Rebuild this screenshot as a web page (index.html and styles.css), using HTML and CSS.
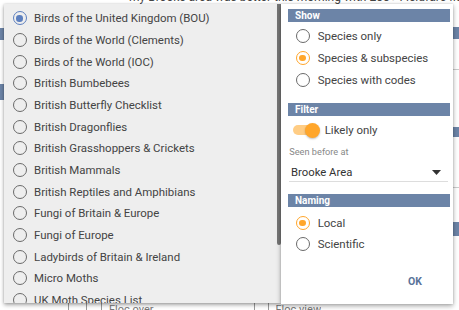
FILE: index.html
```html
<!DOCTYPE html>
<html>
<head>
<meta charset="utf-8">
<link rel="stylesheet" href="styles.css">
</head>
<body>
<div class="bg">
  <div class="bg-text">my Brooke area was better this morning with 200+ Fieldfare flock,</div>
  <div class="bg-cols">
    <div class="bg-left">
      <div class="blk b1"></div>
      <div class="blk b2"></div>
    </div>
    <div class="bg-mid">
      <div class="bg-foot"><span class="ln l1"></span><span class="ln l2"></span><span class="ln l3"></span><span class="foot-t">Floc over</span><span class="ln l4"></span><span class="ln l5"></span><span class="foot-t">Floc view</span></div>
    </div>
    <div class="bg-right">
      <div class="blk r1"></div>
      <div class="hr r2"></div>
      <div class="blk r3"></div>
      <div class="hr r4"></div>
      <div class="blk r5"></div>
    </div>
  </div>
</div>

<div class="menu">
  <div class="thumb"></div>
  <ul class="list">
    <li class="item"><span class="radio blue on"></span>Birds of the United Kingdom (BOU)</li>
    <li class="item"><span class="radio"></span>Birds of the World (Clements)</li>
    <li class="item"><span class="radio"></span>Birds of the World (IOC)</li>
    <li class="item"><span class="radio"></span>British Bumbebees</li>
    <li class="item"><span class="radio"></span>British Butterfly Checklist</li>
    <li class="item"><span class="radio"></span>British Dragonflies</li>
    <li class="item"><span class="radio"></span>British Grasshoppers &amp; Crickets</li>
    <li class="item"><span class="radio"></span>British Mammals</li>
    <li class="item"><span class="radio"></span>British Reptiles and Amphibians</li>
    <li class="item"><span class="radio"></span>Fungi of Britain &amp; Europe</li>
    <li class="item"><span class="radio"></span>Fungi of Europe</li>
    <li class="item"><span class="radio"></span>Ladybirds of Britain &amp; Ireland</li>
    <li class="item"><span class="radio"></span>Micro Moths</li>
    <li class="item"><span class="radio"></span>UK Moth Species List</li>
  </ul>
</div>

<div class="dialog">
  <div class="sec-h">Show</div>
  <div class="group g-show">
    <div class="opt"><span class="radio"></span>Species only</div>
    <div class="opt"><span class="radio orange on"></span>Species &amp; subspecies</div>
    <div class="opt"><span class="radio"></span>Species with codes</div>
  </div>
  <div class="sec-h sec-filter">Filter</div>
  <div class="toggle-row">
    <span class="toggle"><span class="track"></span><span class="knob"></span></span>
    <span>Likely only</span>
  </div>
  <div class="field-label">Seen before at</div>
  <div class="select">
    <span>Brooke Area</span>
    <svg class="caret" width="9" height="5" viewBox="0 0 9 5"><path d="M0 0h9L4.5 5z" fill="#333"/></svg>
  </div>
  <div class="sec-h sec-naming">Naming</div>
  <div class="group g-naming">
    <div class="opt"><span class="radio orange on"></span>Local</div>
    <div class="opt"><span class="radio"></span>Scientific</div>
  </div>
  <div class="actions"><button class="ok">OK</button></div>
</div>
</body>
</html>
```

FILE: styles.css
```css
* { box-sizing: border-box; }
html, body { margin: 0; padding: 0; }
body {
  width: 459px;
  height: 310px;
  overflow: hidden;
  position: relative;
  background: #fff;
  font-family: Roboto, "Liberation Sans", sans-serif;
  color: #444;
}

/* background page */
.bg { width: 459px; height: 310px; display: flex; flex-direction: column; overflow: hidden; }
.bg-text {
  margin-top: -10px;
  padding-left: 129px;
  font-size: 12px;
  line-height: 15px;
  color: #444;
  white-space: nowrap;
}
.bg-cols { flex: 1; display: flex; }
.bg-left { width: 4px; display: flex; flex-direction: column; }
.bg-mid { flex: 1; display: flex; flex-direction: column; justify-content: flex-end; }
.bg-right { width: 6px; margin-left: auto; display: flex; flex-direction: column; }
.blk { background: #6c84a7; }
.b1 { height: 12px; margin-top: 23px; }
.b2 { height: 16px; margin-top: 44px; }
.r1 { height: 12px; margin-top: 22px; }
.hr { height: 1px; background: #ccc; }
.r2 { margin-top: 30px; }
.r3 { height: 10px; margin-top: 57px; }
.r4 { margin-top: 50px; }
.r5 { height: 14px; margin-top: 34px; }
.bg-foot { height: 7px; display: flex; align-items: flex-start; font-size: 11px; color: #777; }
.ln { width: 1px; height: 7px; background: #999; flex: none; }
.l1 { margin-left: 64px; }
.l2 { margin-left: 17px; }
.l3 { margin-left: 14px; }
.l4 { margin-left: 100px; }
.l5 { margin-left: 13px; }
.foot-t { margin-left: 7px; line-height: 14px; height: 7px; overflow: hidden; white-space: nowrap; flex: none; }

/* radio */
.radio {
  width: 14px;
  height: 14px;
  border: 1.6px solid #6a6a6a;
  border-radius: 50%;
  flex: none;
  display: inline-flex;
  align-items: center;
  justify-content: center;
}
.radio.on::after {
  content: "";
  width: 6.5px;
  height: 6.5px;
  border-radius: 50%;
  background: currentColor;
}
.radio.blue { border-color: #5c7fbf; color: #5c7fbf; }
.radio.orange { border-color: #ffa62b; color: #ffa62b; }

/* dropdown list */
.menu {
  position: absolute;
  left: 4px;
  top: 4px;
  width: 277px;
  height: 299px;
  background: #eeeeee;
  overflow: hidden;
  box-shadow: 0 2px 4px rgba(0,0,0,0.35), 0 0 2px rgba(0,0,0,0.15);
}
.thumb {
  position: absolute;
  right: 0;
  top: 0;
  width: 4px;
  height: 241px;
  background: #767676;
  border-radius: 0 0 2px 2px;
}
.list { list-style: none; margin: 0; padding: 3.5px 0 0 8.5px; }
.item {
  height: 21.67px;
  display: flex;
  align-items: center;
  gap: 7.5px;
  font-size: 11.45px;
  color: #444;
  white-space: nowrap;
}

/* dialog */
.dialog {
  position: absolute;
  left: 281px;
  top: 4px;
  width: 172px;
  height: 300px;
  background: #fff;
  padding: 5px 3px 0 7px;
  box-shadow: 0 2px 5px rgba(0,0,0,0.35), 0 0 2px rgba(0,0,0,0.15);
  display: flex;
  flex-direction: column;
}
.sec-h {
  height: 13px;
  line-height: 13px;
  background: #6c84a7;
  color: #fff;
  font-weight: bold;
  font-size: 10px;
  padding-left: 7px;
  flex: none;
}
.sec-filter { margin-top: 13px; }
.sec-naming { margin-top: 12px; }
.group { padding-top: 3.5px; }
.g-naming { padding-top: 5px; }
.opt {
  height: 21.67px;
  display: flex;
  align-items: center;
  gap: 8px;
  padding-left: 7.7px;
  font-size: 11.45px;
  color: #444;
  white-space: nowrap;
}
.toggle-row {
  margin-top: 3px;
  height: 22px;
  display: flex;
  align-items: center;
  gap: 5px;
  padding-left: 4.7px;
  font-size: 11.45px;
  color: #444;
}
.toggle { position: relative; width: 27px; height: 15px; display: inline-block; }
.track {
  position: absolute;
  left: 0;
  top: 2.5px;
  width: 25px;
  height: 10px;
  border-radius: 5px;
  background: #ffcd85;
}
.knob {
  position: absolute;
  right: 0;
  top: 0;
  width: 15px;
  height: 15px;
  border-radius: 50%;
  background: #ffa62b;
  box-shadow: 0 1px 2px rgba(0,0,0,0.25);
}
.field-label {
  margin-top: 5px;
  height: 12px;
  line-height: 12px;
  padding-left: 1.3px;
  font-size: 9.2px;
  color: #888;
}
.select {
  margin: 2.5px 2px 0 1px;
  height: 21px;
  border-bottom: 1px solid #ddd;
  display: flex;
  align-items: center;
  justify-content: space-between;
  padding: 4px 7px 0 2px;
  font-size: 11.3px;
  color: #333;
}
.caret { display: block; }
.actions { display: flex; justify-content: flex-end; margin-top: 14px; padding-right: 28px; }
.ok {
  border: 0;
  background: none;
  padding: 0;
  height: 24px;
  font-family: Roboto, "Liberation Sans", sans-serif;
  font-weight: bold;
  font-size: 10.5px;
  color: #5a7399;
}
```
